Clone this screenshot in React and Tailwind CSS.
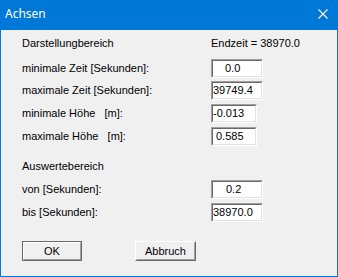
import React from "react";

const font = { fontFamily: '"Liberation Sans", Arial, sans-serif' };

function Field({ value, wide = true, pad = "pl-[1px]" }) {
  return (
    <div
      className={`h-[19px] ${wide ? "w-[52px]" : "w-[46px]"} border border-t-[#a0a0a0] border-l-[#a0a0a0] border-b-white border-r-white`}
    >
      <div
        className={`h-full w-full bg-white border border-t-[#696969] border-l-[#696969] border-b-[#e3e3e3] border-r-[#e3e3e3] flex items-center ${pad} text-[11px] leading-none text-black`}
      >
        {value}
      </div>
    </div>
  );
}

function Row({ label, children, className = "" }) {
  return (
    <div className={`flex items-center h-[19px] ${className}`}>
      <div className="w-[189px] whitespace-pre text-[11px] text-black">{label}</div>
      {children}
    </div>
  );
}

export default function App() {
  return (
    <div className="w-[338px] h-[277px] bg-white" style={font}>
      <div className="w-[338px] h-[277px] flex flex-col border border-[#0078d7] border-t-0 bg-[#f0f0f0]">
        {/* title bar */}
        <div className="h-[30px] -mx-px bg-[#0078d7] flex items-center justify-between pl-[5px] pr-[10px]">
          <span
            className="text-white text-[12px] pb-[2px]"
            style={{ fontFamily: '"Noto Sans", "Liberation Sans", sans-serif' }}
          >
            Achsen
          </span>
          <svg width="10" height="10" viewBox="0 0 10 10" className="mb-[2px]">
            <path d="M0.5 0.5 L9.5 9.5 M9.5 0.5 L0.5 9.5" stroke="white" strokeWidth="1.1" />
          </svg>
        </div>

        {/* body */}
        <div className="flex flex-col pl-[21px] pt-[4px]">
          <Row label="Darstellungbereich">
            <span className="text-[11px] text-black">Endzeit = 38970.0</span>
          </Row>
          <Row label="minimale Zeit [Sekunden]:" className="mt-[6px]">
            <Field value="0.0" pad="pl-[12px]" />
          </Row>
          <Row label="maximale Zeit [Sekunden]:" className="mt-[3px]">
            <Field value="39749.4" pad="pl-[0px]" />
          </Row>
          <Row label="minimale Höhe   [m]:" className="mt-[4px]">
            <Field value="-0.013" wide={false} pad="pl-[0px]" />
          </Row>
          <Row label="maximale Höhe   [m]:" className="mt-[4px]">
            <Field value="0.585" wide={false} pad="pl-[3px]" />
          </Row>

          <Row label="Auswertebereich" className="mt-[11px]" />
          <Row label="von [Sekunden]:" className="mt-[4px]">
            <Field value="0.2" pad="pl-[13px]" />
          </Row>
          <Row label="bis [Sekunden]:" className="mt-[4px]">
            <Field value="38970.0" pad="pl-[0px]" />
          </Row>

          {/* buttons */}
          <div className="flex mt-[19px]">
            <button className="w-[60px] h-[20px] border border-[#696969] bg-[#f0f0f0]">
              <div className="h-full w-full border border-t-white border-l-white border-b-[#a0a0a0] border-r-[#a0a0a0] flex items-center justify-center text-[11px] text-black">
                OK
              </div>
            </button>
            <button className="ml-[53px] w-[61px] h-[20px] border border-t-white border-l-white border-b-[#696969] border-r-[#696969] bg-[#f0f0f0]">
              <div className="h-full w-full border border-t-[#f0f0f0] border-l-[#f0f0f0] border-b-[#a0a0a0] border-r-[#a0a0a0] flex items-center justify-center text-[11px] text-black">
                Abbruch
              </div>
            </button>
          </div>
        </div>
      </div>
    </div>
  );
}
